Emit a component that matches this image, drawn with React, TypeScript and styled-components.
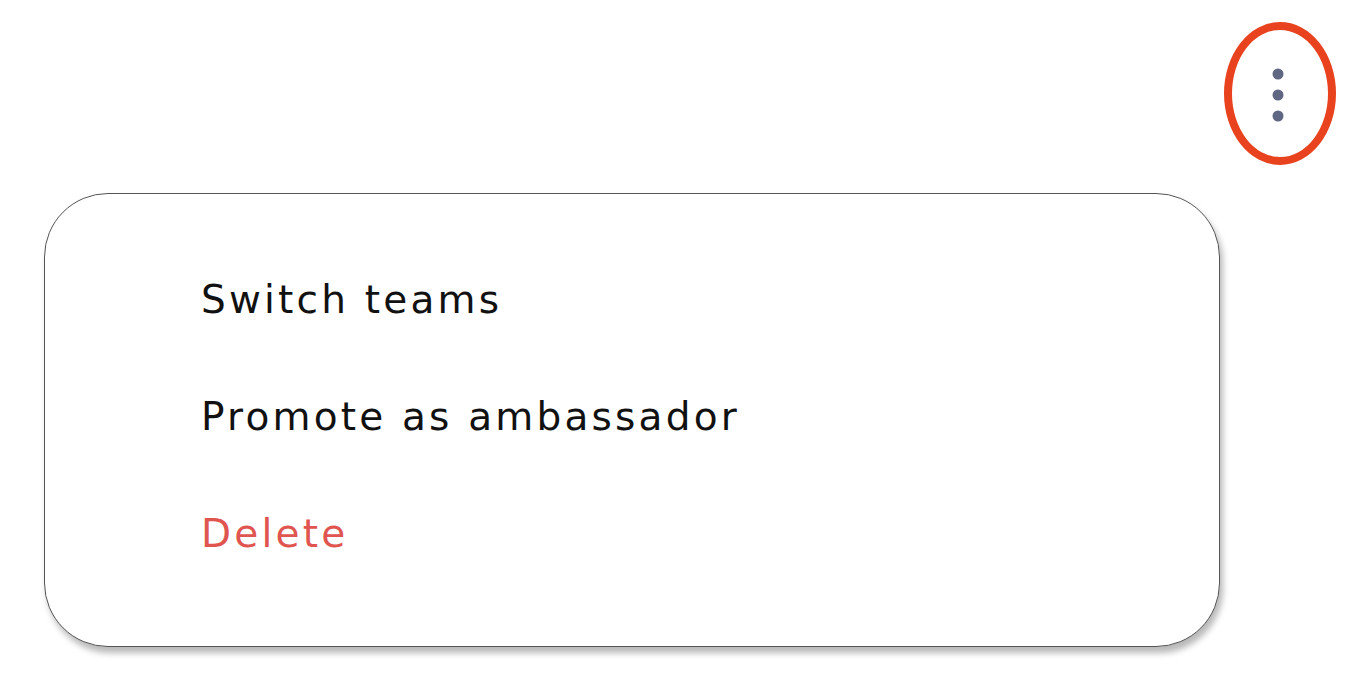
import * as React from 'react';
import styled, { createGlobalStyle } from 'styled-components';

const GlobalStyle = createGlobalStyle`
  html, body {
    margin: 0;
    padding: 0;
    background: #ffffff;
  }
  body {
    font-family: 'DejaVu Sans', 'Open Sans', sans-serif;
  }
`;

const Page = styled.div`
  width: 1360px;
  height: 684px;
  padding-top: 22px;
  box-sizing: border-box;
  overflow: hidden;
`;

const TopRow = styled.div`
  display: flex;
  justify-content: flex-end;
  padding-right: 24px;
`;

const Highlight = styled.div`
  width: 112px;
  height: 143px;
  box-sizing: border-box;
  border: 8px solid #e8421f;
  border-radius: 50%;
  display: flex;
  align-items: center;
  justify-content: center;
  filter: blur(0.7px);
`;

const KebabButton = styled.button`
  border: none;
  background: transparent;
  padding: 0;
  margin: 2px 4px 0 0;
  display: flex;
  cursor: pointer;
`;

const Menu = styled.ul`
  list-style: none;
  margin: 28px 0 0 44px;
  padding: 76px 0 0 156px;
  width: 1176px;
  height: 454px;
  box-sizing: border-box;
  background: #ffffff;
  border: 1.5px solid #555555;
  border-radius: 64px;
  box-shadow: 3px 6px 6px rgba(0, 0, 0, 0.28);
  display: flex;
  flex-direction: column;
  gap: 57px;
`;

const MenuItem = styled.li<{ $danger?: boolean }>`
  font-size: 39px;
  line-height: 60px;
  letter-spacing: 3.2px;
  color: ${(p) => (p.$danger ? '#e05550' : '#111111')};
  cursor: pointer;
`;

const KebabIcon = () => (
  <svg width="12" height="54" viewBox="0 0 12 54">
    <circle cx="6" cy="6" r="5.5" fill="#5f6782" />
    <circle cx="6" cy="27" r="5.5" fill="#5f6782" />
    <circle cx="6" cy="48" r="5.5" fill="#5f6782" />
  </svg>
);

const items = [
  { label: 'Switch teams' },
  { label: 'Promote as ambassador' },
  { label: 'Delete', danger: true },
];

const App = () => {
  return (
    <Page>
      <GlobalStyle />
      <TopRow>
        <Highlight>
          <KebabButton aria-label="More options">
            <KebabIcon />
          </KebabButton>
        </Highlight>
      </TopRow>
      <Menu>
        {items.map((item) => (
          <MenuItem key={item.label} $danger={item.danger}>
            {item.label}
          </MenuItem>
        ))}
      </Menu>
    </Page>
  );
};

export default App;
